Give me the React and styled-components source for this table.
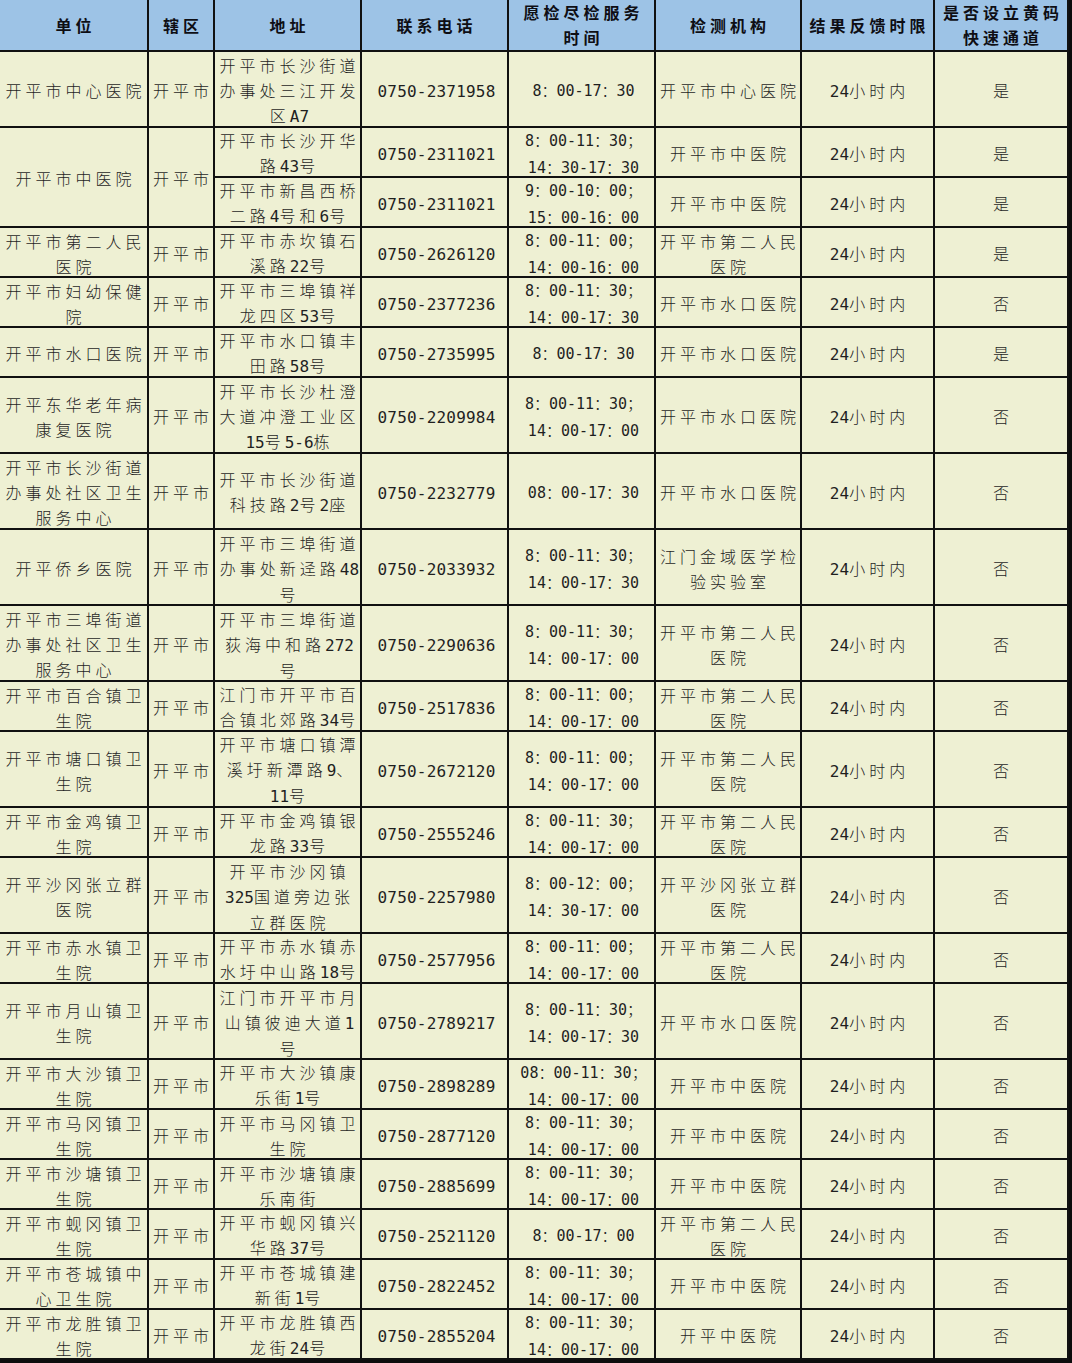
import React from 'react';
import styled, { createGlobalStyle } from 'styled-components';

// Column widths include each cell's 2px right border.
const COLUMNS = [149, 66, 147, 147, 147, 146, 133, 134];

const HEADERS = [
  '单位',
  '辖区',
  '地址',
  '联系电话',
  '愿检尽检服务\n时间',
  '检测机构',
  '结果反馈时限',
  '是否设立黄码\n快速通道',
];

const AREA = '开平市';
const LIMIT = '24小时内';

// subs: [address, phone, hours, lab, yellow-code lane]
const rows = [
  { name: '开平市中心医院', tall: true, subs: [['开平市长沙街道\n办事处三江开发\n区A7', '0750-2371958', '8：00-17：30', '开平市中心医院', '是']] },
  {
    name: '开平市中医院',
    subs: [
      ['开平市长沙开华\n路43号', '0750-2311021', '8：00-11：30；\n14：30-17：30', '开平市中医院', '是'],
      ['开平市新昌西桥\n二路4号和6号', '0750-2311021', '9：00-10：00；\n15：00-16：00', '开平市中医院', '是'],
    ],
  },
  { name: '开平市第二人民\n医院', subs: [['开平市赤坎镇石\n溪路22号', '0750-2626120', '8：00-11：00；\n14：00-16：00', '开平市第二人民\n医院', '是']] },
  { name: '开平市妇幼保健\n院', subs: [['开平市三埠镇祥\n龙四区53号', '0750-2377236', '8：00-11：30；\n14：00-17：30', '开平市水口医院', '否']] },
  { name: '开平市水口医院', subs: [['开平市水口镇丰\n田路58号', '0750-2735995', '8：00-17：30', '开平市水口医院', '是']] },
  { name: '开平东华老年病\n康复医院', tall: true, subs: [['开平市长沙杜澄\n大道冲澄工业区\n15号5-6栋', '0750-2209984', '8：00-11：30；\n14：00-17：00', '开平市水口医院', '否']] },
  { name: '开平市长沙街道\n办事处社区卫生\n服务中心', tall: true, subs: [['开平市长沙街道\n科技路2号2座', '0750-2232779', '08：00-17：30', '开平市水口医院', '否']] },
  { name: '开平侨乡医院', tall: true, subs: [['开平市三埠街道\n办事处新迳路48\n号', '0750-2033932', '8：00-11：30；\n14：00-17：30', '江门金域医学检\n验实验室', '否']] },
  { name: '开平市三埠街道\n办事处社区卫生\n服务中心', tall: true, subs: [['开平市三埠街道\n荻海中和路272\n号', '0750-2290636', '8：00-11：30；\n14：00-17：00', '开平市第二人民\n医院', '否']] },
  { name: '开平市百合镇卫\n生院', subs: [['江门市开平市百\n合镇北郊路34号', '0750-2517836', '8：00-11：00；\n14：00-17：00', '开平市第二人民\n医院', '否']] },
  { name: '开平市塘口镇卫\n生院', tall: true, subs: [['开平市塘口镇潭\n溪圩新潭路9、\n11号', '0750-2672120', '8：00-11：00；\n14：00-17：00', '开平市第二人民\n医院', '否']] },
  { name: '开平市金鸡镇卫\n生院', subs: [['开平市金鸡镇银\n龙路33号', '0750-2555246', '8：00-11：30；\n14：00-17：00', '开平市第二人民\n医院', '否']] },
  { name: '开平沙冈张立群\n医院', tall: true, subs: [['开平市沙冈镇\n325国道旁边张\n立群医院', '0750-2257980', '8：00-12：00；\n14：30-17：00', '开平沙冈张立群\n医院', '否']] },
  { name: '开平市赤水镇卫\n生院', subs: [['开平市赤水镇赤\n水圩中山路18号', '0750-2577956', '8：00-11：00；\n14：00-17：00', '开平市第二人民\n医院', '否']] },
  { name: '开平市月山镇卫\n生院', tall: true, subs: [['江门市开平市月\n山镇彼迪大道1\n号', '0750-2789217', '8：00-11：30；\n14：00-17：30', '开平市水口医院', '否']] },
  { name: '开平市大沙镇卫\n生院', subs: [['开平市大沙镇康\n乐街1号', '0750-2898289', '08：00-11：30；\n14：00-17：00', '开平市中医院', '否']] },
  { name: '开平市马冈镇卫\n生院', subs: [['开平市马冈镇卫\n生院', '0750-2877120', '8：00-11：30；\n14：00-17：00', '开平市中医院', '否']] },
  { name: '开平市沙塘镇卫\n生院', subs: [['开平市沙塘镇康\n乐南街', '0750-2885699', '8：00-11：30；\n14：00-17：00', '开平市中医院', '否']] },
  { name: '开平市蚬冈镇卫\n生院', subs: [['开平市蚬冈镇兴\n华路37号', '0750-2521120', '8：00-17：00', '开平市第二人民\n医院', '否']] },
  { name: '开平市苍城镇中\n心卫生院', subs: [['开平市苍城镇建\n新街1号', '0750-2822452', '8：00-11：30；\n14：00-17：00', '开平市中医院', '否']] },
  { name: '开平市龙胜镇卫\n生院', subs: [['开平市龙胜镇西\n龙街24号', '0750-2855204', '8：00-11：30；\n14：00-17：00', '开平中医院', '否']] },
];

const HAN = /([\u4e00-\u9fff]+)/;

// Ideographs are spread out like the sheet's Song face; digits stay narrow.
const Text = ({ value }) =>
  value.split('\n').map((line, i) => (
    <React.Fragment key={i}>
      {i > 0 && <br />}
      {line.split(HAN).map((part, j) => {
        if (part === '') return null;
        return j % 2 === 1 ? <Han key={j}>{part}</Han> : <Latin key={j}>{part}</Latin>;
      })}
    </React.Fragment>
  ));

const App = () => {
  const heights = ['52px'];
  rows.forEach((row) => row.subs.forEach(() => heights.push(row.tall ? '76px' : '50px')));

  return (
    <>
      <GlobalStyle />
      <Sheet $rows={heights.join(' ')}>
        {HEADERS.map((h) => (
          <Cell key={h} $head>
            <Content>
              <Text value={h} />
            </Content>
          </Cell>
        ))}
        {rows.map((row, r) => (
          <React.Fragment key={r}>
            <Cell $span={row.subs.length}>
              <Content>
                <Text value={row.name} />
              </Content>
            </Cell>
            <Cell $span={row.subs.length}>
              <Content>
                <Text value={AREA} />
              </Content>
            </Cell>
            {row.subs.map(([addr, phone, hours, lab, lane], s) => (
              <React.Fragment key={s}>
                <Cell>
                  <Content>
                    <Text value={addr} />
                  </Content>
                </Cell>
                <Cell $kind="phone">
                  <Content>
                    <Text value={phone} />
                  </Content>
                </Cell>
                <Cell $kind="hours">
                  <Content>
                    <Text value={hours} />
                  </Content>
                </Cell>
                <Cell>
                  <Content>
                    <Text value={lab} />
                  </Content>
                </Cell>
                <Cell>
                  <Content>
                    <Text value={LIMIT} />
                  </Content>
                </Cell>
                <Cell>
                  <Content>
                    <Text value={lane} />
                  </Content>
                </Cell>
              </React.Fragment>
            ))}
          </React.Fragment>
        ))}
      </Sheet>
    </>
  );
};

const GlobalStyle = createGlobalStyle`
  html, body {
    margin: 0;
    padding: 0;
    background: #ffffff;
  }
  body {
    font-family: "Noto Sans CJK SC", sans-serif;
  }
`;

const Sheet = styled.div`
  display: grid;
  grid-template-columns: ${COLUMNS.map((w) => `${w}px`).join(' ')};
  grid-template-rows: ${(p) => p.$rows};
  width: max-content;
  border-right: 3px solid #0c0c0c;
  border-bottom: 3px solid #0c0c0c;
`;

const Cell = styled.div`
  box-sizing: border-box;
  display: flex;
  align-items: center;
  justify-content: center;
  padding: ${(p) => (p.$head ? '0 0 0 4px' : '3px 0 0 4px')};
  grid-row: ${(p) => (p.$span > 1 ? `span ${p.$span}` : 'auto')};
  border-right: 2px solid #111111;
  border-bottom: 2px solid #111111;
  background: ${(p) => (p.$head ? '#9dc3e6' : '#eef0d3')};
  color: ${(p) => (p.$head ? '#0e0e14' : '#1f1f1f')};
  font-size: 16px;
  font-weight: ${(p) => (p.$head ? 700 : 300)};
  line-height: 25px;
  --latin-size: ${(p) => (p.$kind === 'hours' ? '15px' : '16px')};
  --latin-gap: ${(p) => (p.$kind === 'phone' ? '0.2px' : '0px')};
`;

const Content = styled.div`
  text-align: center;
  white-space: nowrap;
`;

const Han = styled.span`
  letter-spacing: 4px;
`;

const Latin = styled.span`
  font-family: "DejaVu Sans Mono", "Noto Sans CJK SC", monospace;
  font-size: var(--latin-size);
  letter-spacing: var(--latin-gap);
`;

export default App;
